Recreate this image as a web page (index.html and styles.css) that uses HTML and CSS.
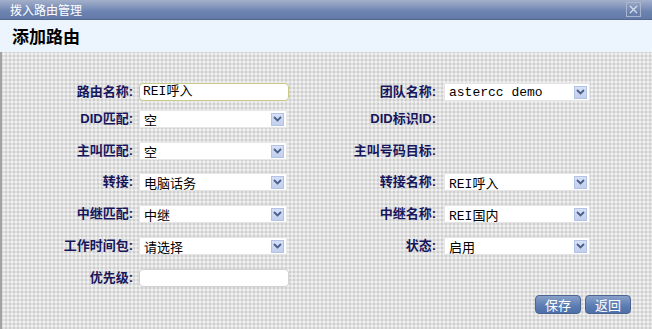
FILE: index.html
```html
<!DOCTYPE html>
<html lang="zh-CN">
<head>
  <meta charset="UTF-8" />
  <title>拨入路由管理</title>
  <link rel="stylesheet" href="styles.css">
</head>
<body>
  <div class="dialog">
    <div class="titlebar">
      <span class="title">拨入路由管理</span>
      <span class="close">
        <svg width="9" height="9" viewBox="0 0 9 9"><path d="M1 1 L8 8 M8 1 L1 8" stroke="#d8e0ee" stroke-width="1.2" fill="none"/></svg>
      </span>
    </div>
    <div class="heading">添加路由</div>

    <div class="content">
      <div class="grid">
        <label>路由名称:</label>
        <div class="input focus">REI呼入</div>
        <label>团队名称:</label>
        <div class="select"><span>astercc demo</span><i class="arrow"><svg width="9" height="6" viewBox="0 0 9 6"><path d="M1 1 L4.5 4.5 L8 1" stroke="#4a5f88" stroke-width="1.8" fill="none"/></svg></i></div>

        <label>DID匹配:</label>
        <div class="select"><span>空</span><i class="arrow"><svg width="9" height="6" viewBox="0 0 9 6"><path d="M1 1 L4.5 4.5 L8 1" stroke="#4a5f88" stroke-width="1.8" fill="none"/></svg></i></div>
        <label>DID标识ID:</label>
        <div></div>

        <label>主叫匹配:</label>
        <div class="select"><span>空</span><i class="arrow"><svg width="9" height="6" viewBox="0 0 9 6"><path d="M1 1 L4.5 4.5 L8 1" stroke="#4a5f88" stroke-width="1.8" fill="none"/></svg></i></div>
        <label>主叫号码目标:</label>
        <div></div>

        <label>转接:</label>
        <div class="select"><span>电脑话务</span><i class="arrow"><svg width="9" height="6" viewBox="0 0 9 6"><path d="M1 1 L4.5 4.5 L8 1" stroke="#4a5f88" stroke-width="1.8" fill="none"/></svg></i></div>
        <label>转接名称:</label>
        <div class="select"><span>REI呼入</span><i class="arrow"><svg width="9" height="6" viewBox="0 0 9 6"><path d="M1 1 L4.5 4.5 L8 1" stroke="#4a5f88" stroke-width="1.8" fill="none"/></svg></i></div>

        <label>中继匹配:</label>
        <div class="select"><span>中继</span><i class="arrow"><svg width="9" height="6" viewBox="0 0 9 6"><path d="M1 1 L4.5 4.5 L8 1" stroke="#4a5f88" stroke-width="1.8" fill="none"/></svg></i></div>
        <label>中继名称:</label>
        <div class="select"><span>REI国内</span><i class="arrow"><svg width="9" height="6" viewBox="0 0 9 6"><path d="M1 1 L4.5 4.5 L8 1" stroke="#4a5f88" stroke-width="1.8" fill="none"/></svg></i></div>

        <label>工作时间包:</label>
        <div class="select"><span>请选择</span><i class="arrow"><svg width="9" height="6" viewBox="0 0 9 6"><path d="M1 1 L4.5 4.5 L8 1" stroke="#4a5f88" stroke-width="1.8" fill="none"/></svg></i></div>
        <label>状态:</label>
        <div class="select"><span>启用</span><i class="arrow"><svg width="9" height="6" viewBox="0 0 9 6"><path d="M1 1 L4.5 4.5 L8 1" stroke="#4a5f88" stroke-width="1.8" fill="none"/></svg></i></div>

        <label>优先级:</label>
        <div class="input"></div>
        <div></div>
        <div></div>
      </div>

      <div class="actions">
        <button type="button">保存</button>
        <button type="button">返回</button>
      </div>
    </div>
  </div>
</body>
</html>
```

FILE: styles.css
```css
html, body {
  margin: 0;
  padding: 0;
}
body {
  width: 652px;
  height: 329px;
  overflow: hidden;
  font-family: "Liberation Sans", "Noto Sans CJK SC", sans-serif;
  background: #e2e2e2;
}
.dialog {
  height: 329px;
  display: flex;
  flex-direction: column;
}
.titlebar {
  height: 19px;
  display: flex;
  align-items: center;
  justify-content: space-between;
  padding: 0 11px 0 10px;
  background: linear-gradient(#a3b0cb, #6d83b0 60%, #6379a8);
  border-bottom: 1px solid #55678e;
}
.title {
  color: #fff;
  font-size: 12px;
  font-family: "Noto Sans CJK SC", sans-serif;
  line-height: 19px;
}
.close {
  width: 15px;
  height: 15px;
  border: 1px solid #aab6cf;
  display: flex;
  align-items: center;
  justify-content: center;
  box-sizing: border-box;
}
.heading {
  height: 32px;
  line-height: 31px;
  padding-left: 12px;
  background: #ecf4fd;
  font-family: "Noto Sans CJK SC", sans-serif;
  font-weight: bold;
  font-size: 17px;
  color: #000;
}
.content {
  flex: 1;
  border-left: 2px solid #a3a3a3;
  background-color: #e1e1e1;
  background-image:
    radial-gradient(circle, #f1f1f1 0.7px, transparent 1.1px),
    radial-gradient(circle, #cecece 0.7px, transparent 1.1px);
  background-size: 4px 4px;
  background-position: 0 0, 2px 2px;
  padding-top: 31px;
}
.grid {
  display: grid;
  grid-template-columns: 137px 150px 155px 148px;
  grid-template-rows: 27px 32px 31px 32px 32px 32px 18px;
}
.grid label {
  height: 18px;
  line-height: 18px;
  text-align: right;
  padding-right: 6px;
  font-weight: bold;
  font-size: 13px;
  color: #16165c;
}
.grid label:nth-child(4n+3) {
  padding-right: 8px;
}
.input {
  height: 18px;
  box-sizing: border-box;
  border: 1px solid #d2d2d2;
  border-radius: 4px;
  background: #fff;
  font-family: "Liberation Mono", "Noto Sans CJK SC", monospace;
  font-size: 13px;
  line-height: 16px;
  padding-left: 3px;
  color: #000;
}
.input.focus {
  border-color: #c9c98a;
}
.select {
  height: 18px;
  box-sizing: border-box;
  border: 1px solid #e6e6e6;
  background: #fff;
  display: flex;
  align-items: center;
  justify-content: space-between;
  padding: 0 2px 0 4px;
  margin-right: 2px;
  font-family: "Liberation Mono", "Noto Sans CJK SC", monospace;
  font-size: 13px;
  color: #000;
}
.arrow {
  width: 13px;
  height: 13px;
  box-sizing: border-box;
  border: 1px solid #b3c3e6;
  background: linear-gradient(#d6e0f6, #c1cfee);
  display: flex;
  align-items: center;
  justify-content: center;
}
.actions {
  display: flex;
  justify-content: flex-end;
  gap: 4px;
  padding: 8px 21px 0 0;
}
.actions button {
  width: 46px;
  height: 19px;
  padding: 0;
  border: 1px solid #4c648f;
  border-radius: 4px;
  background: linear-gradient(#87a0c8, #5e7fb4 55%, #4d6ea7);
  color: #fff;
  font-family: "Noto Sans CJK SC", sans-serif;
  font-size: 13px;
  line-height: 17px;
  cursor: pointer;
}
```
